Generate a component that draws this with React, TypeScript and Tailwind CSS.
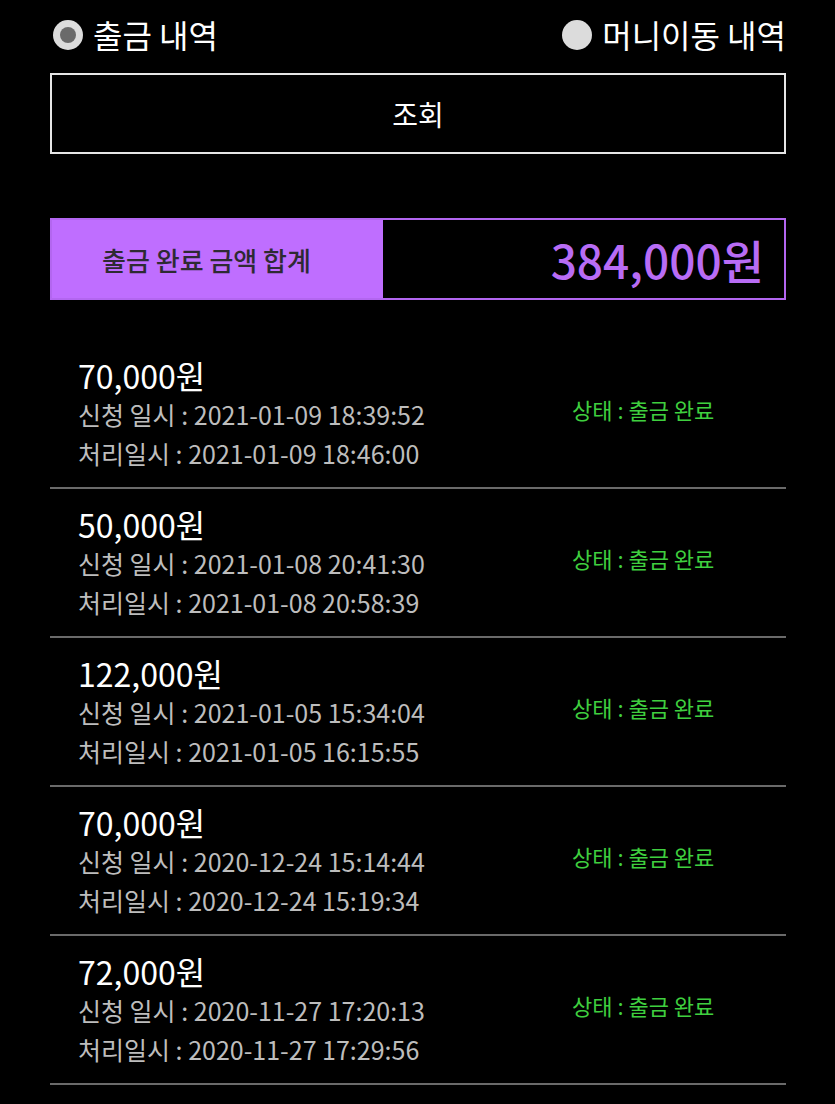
import { useState } from 'react';

type Withdrawal = {
  amount: string;
  requestedAt: string;
  processedAt: string;
  status: string;
};

const rows: Withdrawal[] = [
  { amount: '70,000원', requestedAt: '2021-01-09 18:39:52', processedAt: '2021-01-09 18:46:00', status: '출금 완료' },
  { amount: '50,000원', requestedAt: '2021-01-08 20:41:30', processedAt: '2021-01-08 20:58:39', status: '출금 완료' },
  { amount: '122,000원', requestedAt: '2021-01-05 15:34:04', processedAt: '2021-01-05 16:15:55', status: '출금 완료' },
  { amount: '70,000원', requestedAt: '2020-12-24 15:14:44', processedAt: '2020-12-24 15:19:34', status: '출금 완료' },
  { amount: '72,000원', requestedAt: '2020-11-27 17:20:13', processedAt: '2020-11-27 17:29:56', status: '출금 완료' },
];

function Radio({ checked, label, onClick }: { checked: boolean; label: string; onClick: () => void }) {
  return (
    <button onClick={onClick} className="flex items-center gap-[10px] text-white">
      <span className="w-[30px] h-[30px] rounded-full bg-[#dcdcdc] flex items-center justify-center">
        {checked && <span className="w-[16px] h-[16px] rounded-full bg-[#6a6a6a]" />}
      </span>
      <span className="text-[32px] leading-none -mt-[3px]">{label}</span>
    </button>
  );
}

export default function App() {
  const [mode, setMode] = useState<'withdraw' | 'money'>('withdraw');

  return (
    <div
      className="min-h-[1104px] bg-black pl-[50px] pr-[49px] text-white overflow-hidden"
      style={{ fontFamily: '"Noto Sans CJK KR", "Noto Sans", sans-serif' }}
    >
      <div className="flex items-center justify-between h-[70px] pl-[3px]">
        <Radio checked={mode === 'withdraw'} label="출금 내역" onClick={() => setMode('withdraw')} />
        <Radio checked={mode === 'money'} label="머니이동 내역" onClick={() => setMode('money')} />
      </div>

      <button className="mt-[3px] w-full h-[81px] border-2 border-[#e6e6e6] text-[28px] leading-none text-white">
        조회
      </button>

      <div className="mt-[64px] flex h-[82px] border-2 border-[#b366f0]">
        <div className="w-[331px] bg-[#bf6eff] flex items-center justify-center pr-[22px] text-[26px] text-[#2e2a33] font-medium">
          출금 완료 금액 합계
        </div>
        <div className="flex-1 flex items-center justify-end pr-[20px] text-[46px] text-[#b86cf5] font-medium">
          384,000원
        </div>
      </div>

      <div className="mt-[40px]">
        {rows.map((row, i) => (
          <div key={i} className="flex items-center h-[149px] border-b-2 border-[#6a6a6a]">
            <div className="w-[522px] pl-[28px]">
              <div className="text-[32px] leading-[40px] text-white">{row.amount}</div>
              <div className="text-[25px] leading-[39px] text-[#bdbdbd]">
                신청 일시 : {row.requestedAt}
              </div>
              <div className="text-[25px] leading-[39px] text-[#bdbdbd]">
                처리일시 : {row.processedAt}
              </div>
            </div>
            <div className="text-[22px] text-[#3fcf3f] -mt-[8px]">
              상태 : {row.status}
            </div>
          </div>
        ))}
      </div>
    </div>
  );
}
